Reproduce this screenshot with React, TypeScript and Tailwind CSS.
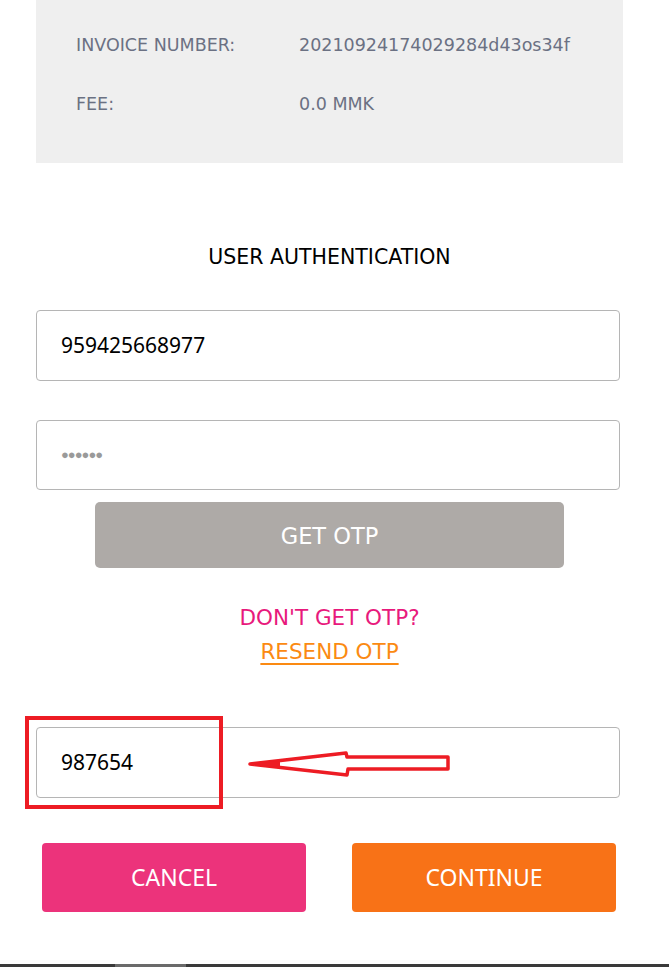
export default function App() {
  return (
    <div className="relative h-[967px] w-[669px] overflow-hidden bg-white font-['Noto_Sans',sans-serif]">
      <div className="ml-[36px] w-[587px]">
        <div className="flex h-[163px] flex-col bg-[#efefef] pl-[40px] pt-[33px] font-['DejaVu_Sans',sans-serif] text-[17.5px] text-[#6b7183]">
          <div className="flex h-[24px] items-center">
            <span className="w-[223px]">INVOICE NUMBER:</span>
            <span>20210924174029284d43os34f</span>
          </div>
          <div className="mt-[35px] flex h-[24px] items-center">
            <span className="w-[223px]">FEE:</span>
            <span>0.0 MMK</span>
          </div>
        </div>

        <h2 className="mt-[79px] text-center font-['DejaVu_Sans',sans-serif] text-[20.5px] leading-[30px] text-black">
          USER AUTHENTICATION
        </h2>

        <div className="mt-[38px] flex h-[71px] w-[584px] items-center rounded-[4px] border border-[#b5b5b5] pl-[24px] text-[21px] text-black">
          959425668977
        </div>

        <div className="mt-[39px] flex h-[70px] w-[584px] items-center rounded-[4px] border border-[#b5b5b5] pl-[24px]">
          <span className="text-[13px] tracking-[-1px] text-[#9a9a9a]">●●●●●●</span>
        </div>

        <button
          type="button"
          className="mt-[12px] ml-[59px] flex h-[66px] w-[469px] items-center justify-center rounded-[5px] bg-[#aeaaa7] pt-[3px] font-['DejaVu_Sans',sans-serif] text-[22.5px] text-white"
        >
          GET OTP
        </button>

        <div className="mt-[33px] flex flex-col items-center font-['DejaVu_Sans',sans-serif] text-[21.5px] leading-[34px]">
          <span className="text-[#e8197c]">DON'T GET OTP?</span>
          <span className="text-[#fb8a12] underline decoration-[2px] underline-offset-[4px]">RESEND OTP</span>
        </div>

        <div className="mt-[58px] flex h-[71px] w-[584px] items-center rounded-[4px] border border-[#b5b5b5] pl-[24px] text-[21px] text-black">
          987654
        </div>

        <div className="mt-[45px] flex gap-[46px] pl-[6px]">
          <button
            type="button"
            className="flex h-[69px] w-[264px] items-center justify-center rounded-[4px] bg-[#ec337b] text-[23px] text-white"
          >
            CANCEL
          </button>
          <button
            type="button"
            className="flex h-[69px] w-[264px] items-center justify-center rounded-[4px] bg-[#f87217] text-[23px] text-white"
          >
            CONTINUE
          </button>
        </div>
      </div>

      {/* annotation overlay */}
      <div className="absolute left-[25px] top-[716px] h-[93px] w-[198px] border-[4px] border-[#ed1c24]" />
      <svg className="absolute left-[240px] top-[740px]" width="220" height="45" viewBox="0 0 220 45">
        <path
          d="M10 24 L106 13 L107 17 L208 17 L208 29 L108 29 L107 35 Z"
          fill="none"
          stroke="#ed1c24"
          strokeWidth="3.5"
          strokeLinejoin="round"
        />
        <path d="M10 24 L40 21 L40 27 Z" fill="#ed1c24" />
      </svg>

      <div className="absolute bottom-0 left-0 flex h-[3px] w-full bg-[#3a3a3a]">
        <div className="ml-[115px] h-full w-[71px] bg-[#6a6a6a]" />
      </div>
    </div>
  );
}
